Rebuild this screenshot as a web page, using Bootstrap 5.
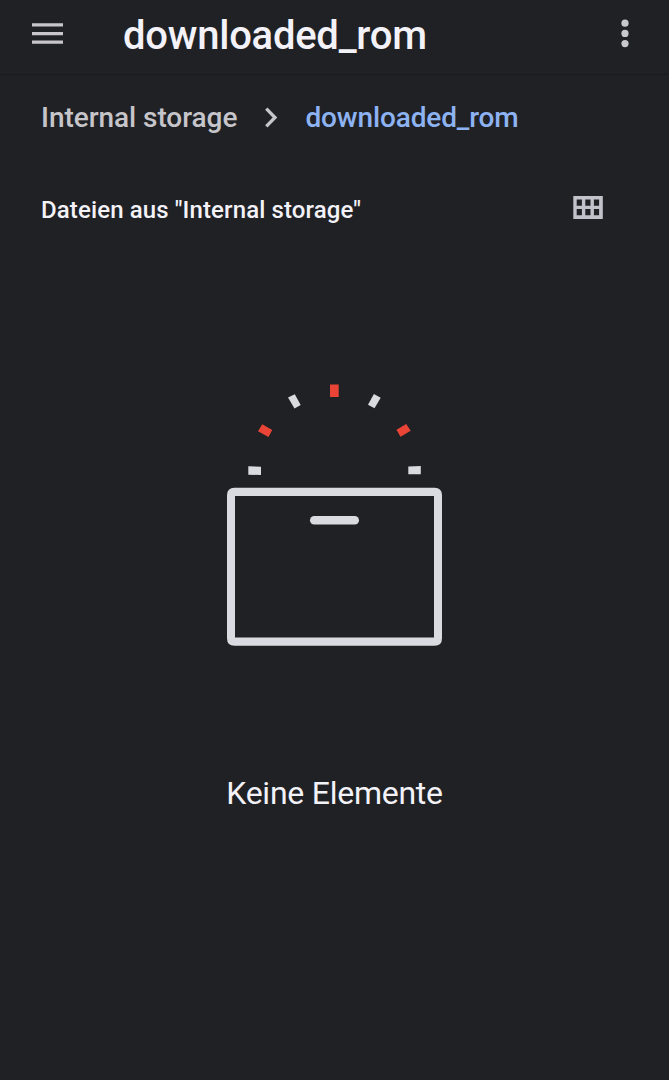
<!DOCTYPE html>
<html lang="de" data-bs-theme="dark">
<head>
<meta charset="utf-8">
<meta name="viewport" content="width=device-width, initial-scale=1">
<title>downloaded_rom</title>
<link href="https://cdn.jsdelivr.net/npm/bootstrap@5.3.0/dist/css/bootstrap.min.css" rel="stylesheet">
<style>
body{background:#202125;color:#f3f2f8;font-family:Roboto,sans-serif;min-height:1080px;overflow:hidden}
svg{display:block;flex:none}
.topbar{height:75px;border-bottom:1px solid #1a1b1e;padding:0 33px 3px 32px}
.topbar svg{margin-bottom:4px}
.topbar h1{font-size:40px;font-weight:500;line-height:48px;margin-left:60px;letter-spacing:-.25px;color:#f3f2f8}
.crumbs{height:86px;padding-left:41px;font-size:28px;font-weight:500;color:#c6c5ca}
.crumbs a{color:inherit;letter-spacing:-.05px}
.crumbs svg{margin:0 23px 0 25px}
.crumbs .active{color:#8db3f2;letter-spacing:-.13px}
.section-head{height:97px;padding:0 66px 0 41px}
.section-head h2{font-size:24px;font-weight:500;line-height:30px;letter-spacing:.12px;color:#f3f2f8}
.section-head svg{margin-bottom:3px}
.empty-text{font-size:32px;line-height:40px;margin-top:127px;letter-spacing:-.25px}
</style>
</head>
<body>
<header class="topbar d-flex align-items-center">
  <svg width="31" height="22" viewBox="0 0 31 22" fill="#c6c6cb" role="img" aria-label="Menü"><path d="M0 .3h31v3.200H0zM0 9h31v3.200H0zM0 17.500h31v3.200H0z"/></svg>
  <h1 class="mb-0 flex-grow-1">downloaded_rom</h1>
  <svg width="22" height="30" viewBox="0 0 22 30" fill="#c9c8ce" role="img" aria-label="Mehr"><circle cx="11" cy="4.200" r="3.600"/><circle cx="11" cy="14.400" r="3.600"/><circle cx="11" cy="24.600" r="3.600"/></svg>
</header>
<nav class="crumbs d-flex align-items-center" aria-label="Pfad">
  <a href="#" class="text-decoration-none">Internal storage</a>
  <svg width="20" height="22" viewBox="0 0 20 22" fill="none" stroke="#c6c5ca" stroke-width="3.300"><path d="M4.300 1.600 13 10.500 4.300 19.400"/></svg>
  <span class="active">downloaded_rom</span>
</nav>
<section class="section-head d-flex align-items-center justify-content-between">
  <h2 class="mb-0">Dateien aus "Internal storage"</h2>
  <svg width="30" height="24" viewBox="0 0 30 24" fill="#c2c2ca" fill-rule="evenodd" role="img" aria-label="Rasteransicht"><path d="M.3 0H29.800V23H.3ZM3.700 3.400V9.700H8.900V3.400ZM12.300 3.400V9.700H17.500V3.400ZM20.900 3.400V9.700H26.100V3.400ZM3.700 13V19.300H8.900V13ZM12.300 13V19.300H17.500V13ZM20.900 13V19.300H26.100V13Z"/></svg>
</section>
<main class="d-flex flex-column align-items-center">
  <svg width="215" height="388" viewBox="227 258 215 388" fill="#dadbe0" aria-hidden="true">
    <g fill="#e94435">
      <path d="M330 384.500H338.700V397H330Z"/>
      <path d="M262.300 424.200 272.200 430 268.500 437 258 431.200Z"/>
      <path d="M406.200 424 410.700 430.700 400.500 436.700 396.500 429.700Z"/>
    </g>
    <path d="M294.800 394.200 300.700 405 294.500 408.500 288 397.500Z"/>
    <path d="M373.900 394 380.700 397.700 374.500 408.300 368 404.800Z"/>
    <path d="M248.300 466.200 261 466.800 261 475 248.300 474.700Z"/>
    <path d="M408.300 466.400 420.800 465.900 420.800 474.300 408.300 474.300Z"/>
    <path fill-rule="evenodd" d="M234.500 487.700H434.500Q442 487.700 442 495.200V638.200Q442 645.800 434.500 645.800H234.500Q227 645.800 227 638.200V495.200Q227 487.700 234.500 487.700ZM235 496V637.500H434V496Z"/>
    <rect x="310" y="516" width="49" height="8.500" rx="4.250"/>
  </svg>
  <p class="empty-text mb-0">Keine Elemente</p>
</main>
<script src="https://cdn.jsdelivr.net/npm/bootstrap@5.3.0/dist/js/bootstrap.bundle.min.js"></script>
</body>
</html>
